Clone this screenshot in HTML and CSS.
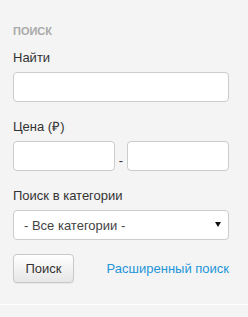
FILE: index.html
```html
<!DOCTYPE html>
<html lang="ru">
<head>
<meta charset="utf-8">
<title>Поиск</title>
<link rel="stylesheet" href="styles.css">
</head>
<body>
<div class="widget">
  <h3 class="widget-title">Поиск</h3>
  <form class="search-form">
    <div class="field">
      <label class="field-label">Найти</label>
      <input class="text-input" type="text">
    </div>
    <div class="field">
      <label class="field-label">Цена (₽)</label>
      <div class="price-row">
        <input class="text-input price-input" type="text">
        <span class="price-dash">-</span>
        <input class="text-input price-input" type="text">
      </div>
    </div>
    <div class="field">
      <label class="field-label">Поиск в категории</label>
      <div class="select-wrap">
        <select class="select-input">
          <option>- Все категории -</option>
        </select>
        <span class="select-arrow"></span>
      </div>
    </div>
    <div class="actions">
      <button class="btn" type="button">Поиск</button>
      <a class="adv-link" href="#">Расширенный поиск</a>
    </div>
  </form>
</div>
</body>
</html>
```
FILE: styles.css
```css
html, body {
  margin: 0;
  padding: 0;
  background: #f4f4f4;
}
body {
  font-family: "Liberation Sans", Arial, sans-serif;
  font-size: 13px;
  color: #333;
  width: 248px;
  height: 317px;
  overflow: hidden;
}
.widget {
  padding: 24px 19px 21px 13px;
  border-bottom: 1px solid #ffffff;
}
.widget-title {
  margin: 0 0 10px;
  font-size: 11px;
  line-height: 15px;
  font-weight: bold;
  text-transform: uppercase;
  color: #a9a9a9;
}
.search-form {
  display: flex;
  flex-direction: column;
}
.field {
  display: flex;
  flex-direction: column;
  margin-bottom: 16px;
}
.field-label {
  font-size: 13px;
  line-height: 18px;
  margin-bottom: 5px;
  color: #333;
}
.text-input {
  box-sizing: border-box;
  height: 30px;
  width: 216px;
  margin: 0;
  padding: 0 8px;
  border: 1px solid #cccccc;
  border-radius: 4px;
  background: #fff;
  font: inherit;
}
.price-row {
  display: flex;
  align-items: center;
  width: 216px;
  justify-content: space-between;
}
.price-input {
  width: 102px;
}
.price-dash {
  font-size: 13px;
  color: #333;
  padding-top: 8px;
}
.select-wrap {
  position: relative;
  width: 216px;
}
.select-input {
  -webkit-appearance: none;
  appearance: none;
  box-sizing: border-box;
  width: 216px;
  height: 30px;
  margin: 0;
  padding: 0 20px 0 10px;
  border: 1px solid #cccccc;
  border-radius: 4px;
  background: #fff;
  font-family: inherit;
  font-size: 13px;
  color: #444;
}
.select-arrow {
  position: absolute;
  right: 8px;
  top: 12px;
  width: 0;
  height: 0;
  border-left: 3px solid transparent;
  border-right: 3px solid transparent;
  border-top: 5px solid #111;
}
.actions {
  display: flex;
  align-items: center;
  justify-content: space-between;
  width: 216px;
  margin-top: -2px;
}
.btn {
  box-sizing: border-box;
  width: 61px;
  height: 29px;
  padding: 0;
  border: 1px solid #c8c8c8;
  border-radius: 4px;
  background: linear-gradient(#ffffff, #e6e6e6);
  box-shadow: 0 1px 1px rgba(0,0,0,0.06);
  font-family: inherit;
  font-size: 13px;
  color: #333;
}
.adv-link {
  font-size: 13px;
  color: #1f95d8;
  text-decoration: none;
}
```
